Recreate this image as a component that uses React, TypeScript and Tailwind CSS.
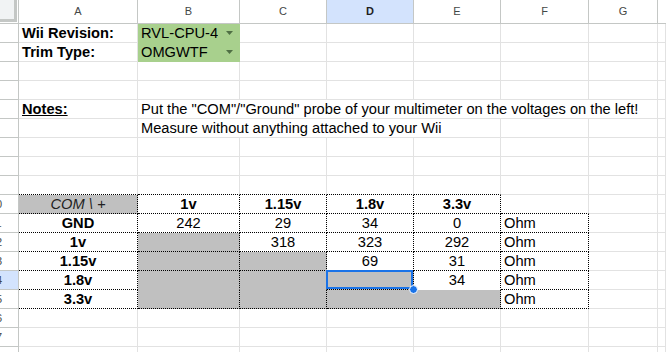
import React from "react";

const FONT = "font-['Liberation_Sans',Arial,sans-serif]";

// column widths (incl. right grid line)
const A = "w-[119px]";
const B = "w-[102px]";
const C = "w-[87px]";
const D = "w-[87px]";
const E = "w-[87px]";
const F = "w-[88px]";
const G = "w-[69px]";

const GRID = "border-r border-b border-[#e2e2e2]";
const DOT = "border-r border-b border-dotted border-black";
const DOT_TOP = "border-r border-b border-r-[#e2e2e2] border-b-black [border-bottom-style:dotted]!";
const DOT_OPEN = "border-r border-b border-dotted border-black border-b-transparent";
const GRAY = "bg-[#c0c0c0]";

function Cell({
  w,
  cls = GRID,
  children,
  extra = "",
}: {
  w: string;
  cls?: string;
  children?: React.ReactNode;
  extra?: string;
}) {
  return (
    <div
      className={`${w} shrink-0 h-full px-[3px] leading-[18px] whitespace-nowrap overflow-hidden ${cls} ${extra}`}
    >
      {children}
    </div>
  );
}

function Row({ n, hl, children }: { n: number; hl?: boolean; children?: React.ReactNode }) {
  return (
    <div className="flex h-[19px]">
      <div
        className={`w-[19px] shrink-0 h-full overflow-hidden flex items-center border-r border-b border-[#c4c7c5] ${
          hl ? "bg-[#d3e3fd]" : "bg-white"
        }`}
      >
        <span className="block shrink-0 w-[46px] ml-[-27px] text-center text-[11px] text-[#444746]">{n}</span>
      </div>
      {children}
    </div>
  );
}

// empty cells from a given column onwards
function Blank({ from }: { from: number }) {
  const ws = [A, B, C, D, E, F, G];
  return (
    <>
      {ws.slice(from).map((w, i) => (
        <Cell key={i} w={w} />
      ))}
      <Cell w="flex-1" />
    </>
  );
}

function Dropdown({ text }: { text: string }) {
  return (
    <div
      className={`${B} shrink-0 h-full flex pl-[3px] pr-[6px] leading-[18px] bg-[#a8d08d] border-r border-b border-transparent`}
    >
      <span className="flex-1 min-w-0 overflow-hidden whitespace-nowrap">{text}</span>
      <svg width="7" height="4" viewBox="0 0 7 4" className="ml-[8px] shrink-0 self-center">
        <path d="M0 0 L7 0 L3.5 4 Z" fill="#4f6f44" />
      </svg>
    </div>
  );
}

export default function App() {
  const headers = [
    { l: "A", w: A },
    { l: "B", w: B },
    { l: "C", w: C },
    { l: "D", w: D, sel: true },
    { l: "E", w: E },
    { l: "F", w: F },
    { l: "G", w: G },
  ];

  return (
    <div className={`w-[666px] h-[352px] overflow-hidden bg-white text-black text-[14.67px] ${FONT}`}>
      {/* column headers */}
      <div className="flex h-[24px]">
        <div className="w-[19px] shrink-0 h-full border-r border-b border-[#c4c7c5] bg-white">
          <div className="w-[17px] h-[22px] bg-[#f1f3f4] border-r-[3px] border-b-[3px] border-[#c4c7c5]" />
        </div>
        {headers.map((h) => (
          <div
            key={h.l}
            className={`${h.w} shrink-0 h-full flex items-center justify-center text-[11px] border-r border-b border-[#c4c7c5] ${
              h.sel ? "bg-[#d3e3fd] font-bold text-[#1f1f1f]" : "bg-white text-[#444746]"
            }`}
          >
            {h.l}
          </div>
        ))}
        <div className="flex-1 h-full border-b border-[#c4c7c5]" />
      </div>

      <Row n={1}>
        <Cell w={A} extra="font-bold">Wii Revision:</Cell>
        <Dropdown text="RVL-CPU-4" />
        <Blank from={2} />
      </Row>
      <Row n={2}>
        <Cell w={A} extra="font-bold">Trim Type:</Cell>
        <Dropdown text="OMGWTF" />
        <Blank from={2} />
      </Row>
      <Row n={3}>
        <Blank from={0} />
      </Row>
      <Row n={4}>
        <Blank from={0} />
      </Row>
      <Row n={5}>
        <Cell w={A} extra="font-bold underline">Notes:</Cell>
        <Cell w="w-[520px]">Put the "COM"/"Ground" probe of your multimeter on the voltages on the left!</Cell>
        <Cell w="flex-1" />
      </Row>
      <Row n={6}>
        <Cell w={A} />
        <Cell w="w-[363px]">Measure without anything attached to your Wii</Cell>
        <Blank from={5} />
      </Row>
      <Row n={7}>
        <Blank from={0} />
      </Row>
      <Row n={8}>
        <Blank from={0} />
      </Row>
      <Row n={9}>
        <Cell w={A} cls={DOT_TOP} />
        <Cell w={B} cls={DOT_TOP} />
        <Cell w={C} cls={DOT_TOP} />
        <Cell w={D} cls={DOT_TOP} />
        <Cell w={E} cls={DOT_TOP} />
        <Blank from={5} />
      </Row>

      {/* measurement table */}
      <Row n={10}>
        <Cell w={A} cls={DOT} extra={`${GRAY} italic text-center text-[#222]`}>COM \ +</Cell>
        <Cell w={B} cls={DOT} extra="font-bold text-center">1v</Cell>
        <Cell w={C} cls={DOT} extra="font-bold text-center">1.15v</Cell>
        <Cell w={D} cls={DOT} extra="font-bold text-center">1.8v</Cell>
        <Cell w={E} cls={DOT} extra="font-bold text-center">3.3v</Cell>
        <Cell w={F} cls={DOT_TOP} />
        <Cell w={G} />
        <Cell w="flex-1" />
      </Row>
      <Row n={11}>
        <Cell w={A} cls={DOT} extra="font-bold text-center">GND</Cell>
        <Cell w={B} cls={DOT} extra="text-center">242</Cell>
        <Cell w={C} cls={DOT} extra="text-center">29</Cell>
        <Cell w={D} cls={DOT} extra="text-center">34</Cell>
        <Cell w={E} cls={DOT} extra="text-center">0</Cell>
        <Cell w={F} cls={DOT}>Ohm</Cell>
        <Cell w={G} />
        <Cell w="flex-1" />
      </Row>
      <Row n={12}>
        <Cell w={A} cls={DOT} extra="font-bold text-center">1v</Cell>
        <Cell w={B} cls={DOT} extra={GRAY} />
        <Cell w={C} cls={DOT} extra="text-center">318</Cell>
        <Cell w={D} cls={DOT} extra="text-center">323</Cell>
        <Cell w={E} cls={DOT} extra="text-center">292</Cell>
        <Cell w={F} cls={DOT}>Ohm</Cell>
        <Cell w={G} />
        <Cell w="flex-1" />
      </Row>
      <Row n={13}>
        <Cell w={A} cls={DOT} extra="font-bold text-center">1.15v</Cell>
        <Cell w={B} cls={DOT} extra={GRAY} />
        <Cell w={C} cls={DOT} extra={GRAY} />
        <Cell w={D} cls={DOT} extra="text-center">69</Cell>
        <Cell w={E} cls={DOT} extra="text-center">31</Cell>
        <Cell w={F} cls={DOT}>Ohm</Cell>
        <Cell w={G} />
        <Cell w="flex-1" />
      </Row>
      <Row n={14} hl>
        <Cell w={A} cls={DOT} extra="font-bold text-center">1.8v</Cell>
        <Cell w={B} cls={DOT_OPEN} extra={GRAY} />
        <Cell w={C} cls={DOT_OPEN} extra={GRAY} />
        {/* selected cell */}
        <div className={`${D} shrink-0 h-full relative ${DOT} ${GRAY}`}>
          <div className="absolute left-[-1px] top-[-1px] right-0 bottom-0 border-2 border-[#1a73e8]" />
          <div className="absolute right-[-5px] bottom-[-5px] w-[9px] h-[9px] rounded-full bg-[#1a73e8] border border-white z-10" />
        </div>
        <Cell w={E} cls={DOT_OPEN} extra="text-center">34</Cell>
        <Cell w={F} cls={DOT}>Ohm</Cell>
        <Cell w={G} />
        <Cell w="flex-1" />
      </Row>
      <Row n={15}>
        <Cell w={A} cls={DOT} extra="font-bold text-center">3.3v</Cell>
        <Cell w={B} cls={DOT} extra={GRAY} />
        <Cell w={C} cls={DOT} extra={GRAY} />
        <Cell w="w-[174px]" cls={DOT} extra={GRAY} />
        <Cell w={F} cls={DOT}>Ohm</Cell>
        <Cell w={G} />
        <Cell w="flex-1" />
      </Row>
      <Row n={16}>
        <Blank from={0} />
      </Row>
      <Row n={17}>
        <Blank from={0} />
      </Row>
      <Row n={18}>
        <Blank from={0} />
      </Row>
    </div>
  );
}
